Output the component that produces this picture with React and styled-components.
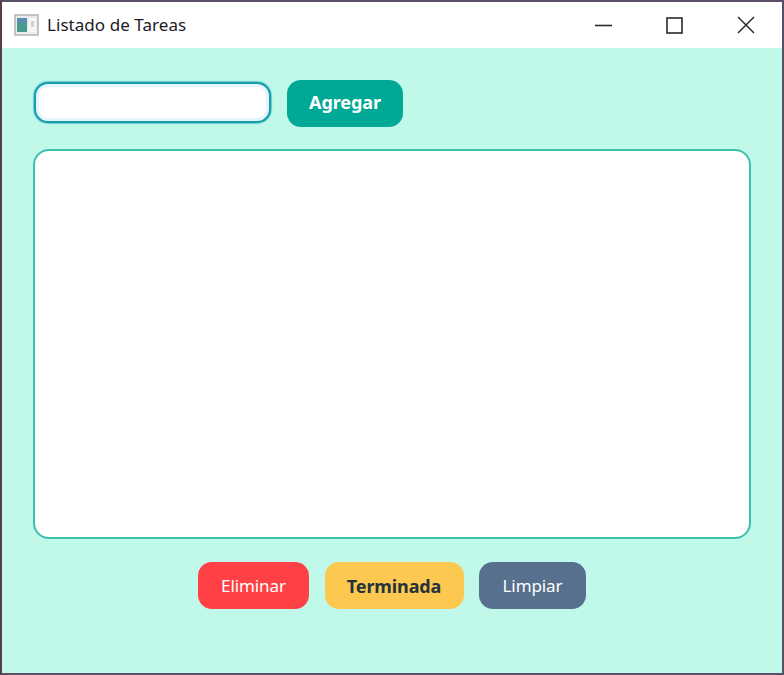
import React from "react";
import styled, { createGlobalStyle } from "styled-components";

const Global = createGlobalStyle`
  html, body { margin: 0; padding: 0; background: #c0f9ea; }
`;

const Window = styled.div`
  box-sizing: border-box;
  width: 784px;
  height: 675px;
  display: flex;
  flex-direction: column;
  border: 2px solid #5a4e68;
  border-left-color: #5a3a44;
  background: #c0f9ea;
  font-family: "Noto Sans", "Open Sans", sans-serif;
  overflow: hidden;
`;

const TitleBar = styled.div`
  flex: none;
  height: 46px;
  display: flex;
  align-items: center;
  background: #fff;
  padding-left: 12px;
`;

const AppIcon = styled.svg`
  width: 25px;
  height: 22px;
  flex: none;
`;

const Title = styled.span`
  margin-left: 8px;
  margin-bottom: 2px;
  font-size: 17px;
  letter-spacing: 0.05px;
  color: #1c1a28;
`;

const Controls = styled.div`
  margin-left: auto;
  display: flex;
  align-items: center;
  padding-right: 1px;
`;

const ControlButton = styled.div`
  width: 71px;
  height: 46px;
  display: flex;
  align-items: center;
  justify-content: center;
`;

const Content = styled.main`
  flex: 1;
  display: flex;
  flex-direction: column;
  padding: 32px 31px 64px 31px;
`;

const TopRow = styled.div`
  display: flex;
  align-items: flex-start;
  gap: 16px;
  height: 47px;
`;

const Input = styled.input`
  box-sizing: border-box;
  width: 237px;
  height: 41px;
  margin: 2px 0 0 1px;
  border: 2px solid #169eae;
  border-radius: 14px;
  outline: none;
  background: #fff;
  box-shadow: inset 0 0 0 3px #e6f4fb, 0 0 1px 1px rgba(22, 158, 174, 0.5);
`;

const Button = styled.button`
  box-sizing: border-box;
  height: 47px;
  width: ${(p) => p.$w}px;
  border: none;
  border-radius: 14px;
  padding: 0 0 ${(p) => p.$lift || 0}px;
  background: ${(p) => p.$bg};
  color: ${(p) => p.$fg || "#fff"};
  font-family: inherit;
  font-size: ${(p) => (p.$bold ? 18 : 17)}px;
  font-weight: ${(p) => (p.$bold ? 700 : 400)};
  letter-spacing: -0.1px;
`;

const TaskList = styled.div`
  box-sizing: border-box;
  margin-top: 22px;
  height: 390px;
  width: 718px;
  background: #fff;
  border: 2px solid #3cc0ae;
  border-radius: 16px;
`;

const BottomRow = styled.div`
  margin-top: 23px;
  display: flex;
  justify-content: center;
  gap: 15.5px;
`;

export default function App() {
  return (
    <>
      <Global />
      <Window>
        <TitleBar>
          <AppIcon viewBox="0 0 25 22">
            <rect x="1" y="1" width="23" height="20" fill="#ececec" stroke="#b4b4b4" strokeWidth="1.5" />
            <rect x="3" y="4" width="10" height="14" fill="#4a9a8c" />
            <rect x="3" y="4" width="10" height="5" fill="#5a8cb0" />
            <rect x="15" y="4" width="7" height="14" fill="#f6f6f6" />
            <rect x="17" y="7" width="3" height="6" fill="#cbd4d4" />
          </AppIcon>
          <Title>Listado de Tareas</Title>
          <Controls>
            <ControlButton>
              <svg width="17" height="3" viewBox="0 0 17 3">
                <path d="M0 1.5H17" stroke="#2a2a2a" strokeWidth="1.6" />
              </svg>
            </ControlButton>
            <ControlButton>
              <svg width="17" height="17" viewBox="0 0 17 17">
                <rect x="1" y="1" width="15" height="15" fill="none" stroke="#2a2a2a" strokeWidth="1.6" />
              </svg>
            </ControlButton>
            <ControlButton>
              <svg width="18" height="18" viewBox="0 0 18 18">
                <path d="M1 1L17 17M17 1L1 17" stroke="#2a2a2a" strokeWidth="1.5" />
              </svg>
            </ControlButton>
          </Controls>
        </TitleBar>
        <Content>
          <TopRow>
            <Input />
            <Button $w={116} $bg="#00a995" $bold $lift={3}>Agregar</Button>
          </TopRow>
          <TaskList />
          <BottomRow>
            <Button $w={111} $bg="#ff4045">Eliminar</Button>
            <Button $w={139} $bg="#fcc850" $fg="#26323a" $bold>Terminada</Button>
            <Button $w={107} $bg="#56708e">Limpiar</Button>
          </BottomRow>
        </Content>
      </Window>
    </>
  );
}
